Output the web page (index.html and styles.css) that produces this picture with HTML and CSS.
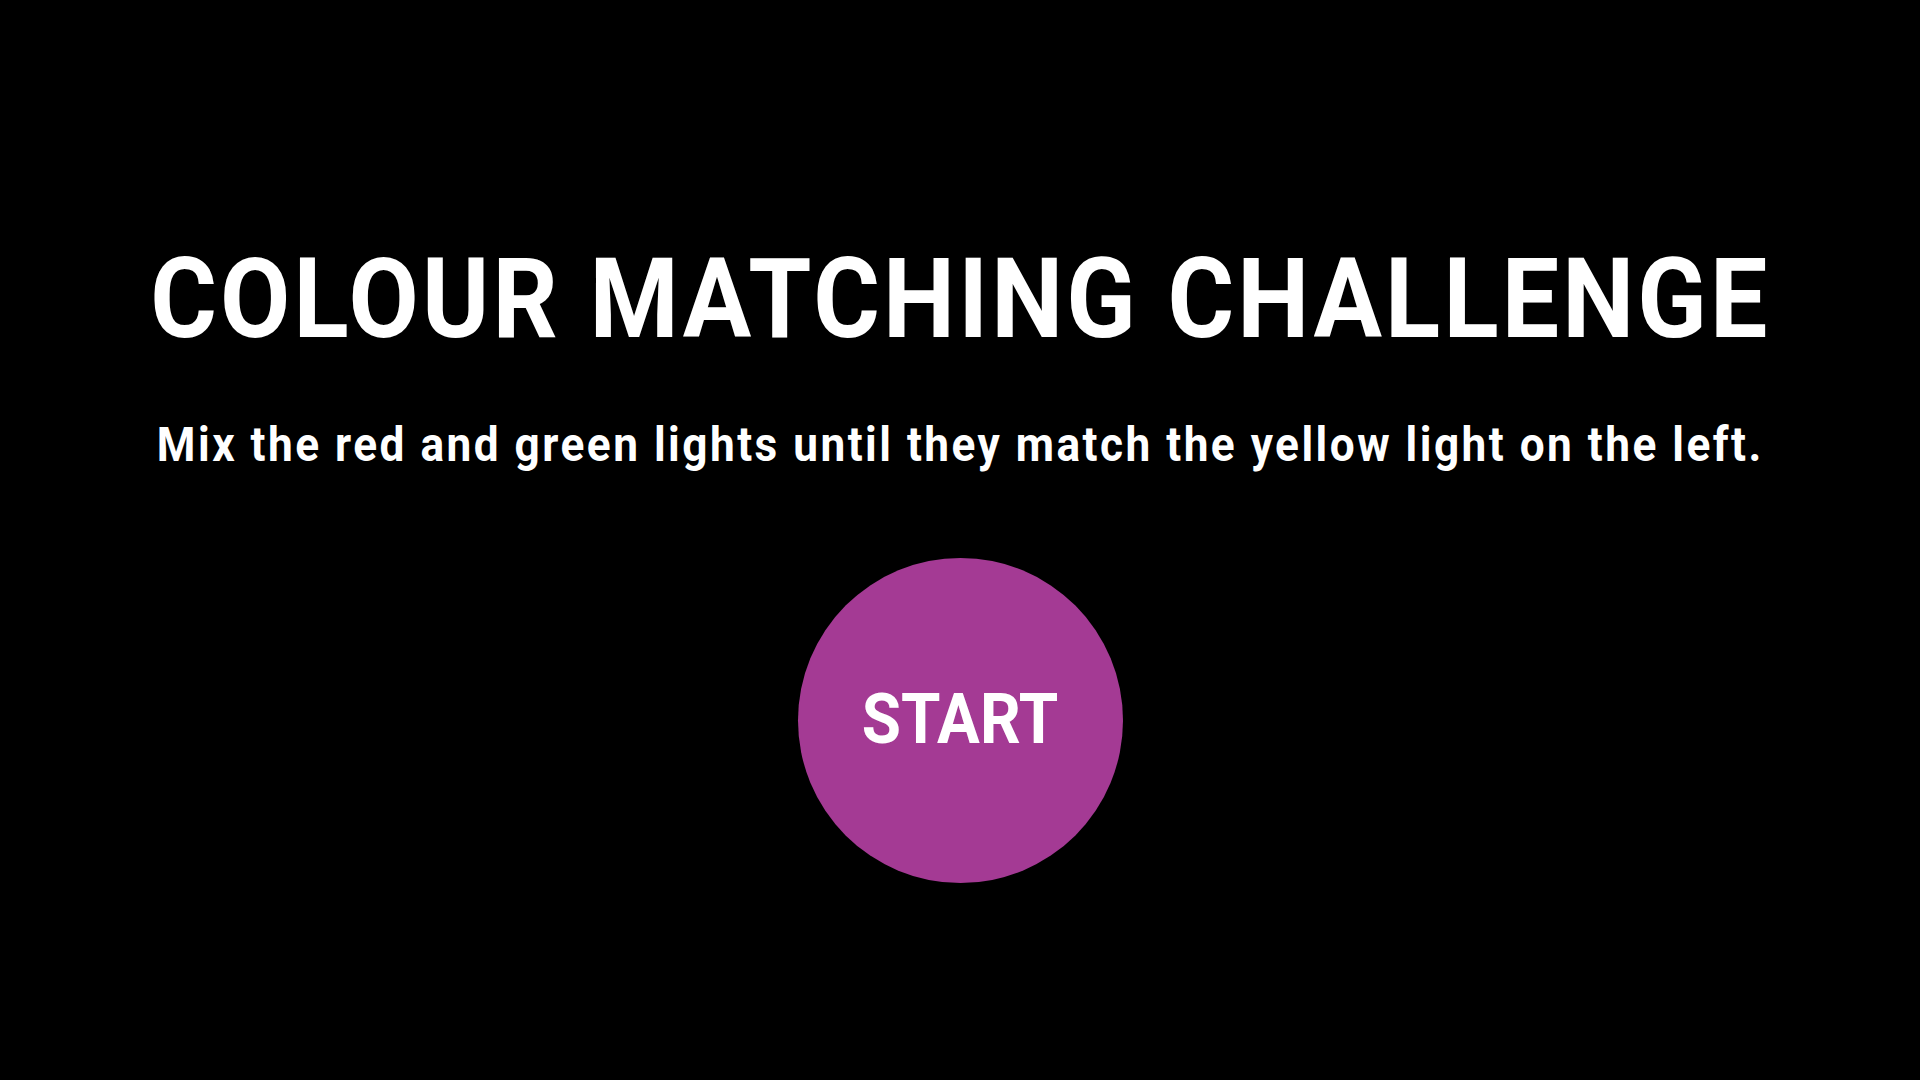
FILE: index.html
```html
<!DOCTYPE html>
<html lang="en">
<head>
<meta charset="utf-8">
<title>Colour Matching Challenge</title>
<link rel="stylesheet" href="styles.css">
</head>
<body>
<main class="screen">
  <h1 class="title">COLOUR MATCHING CHALLENGE</h1>
  <p class="subtitle">Mix the red and green lights until they match the yellow light on the left.</p>
  <button class="start"><span class="start-label">START</span></button>
</main>
</body>
</html>
```
FILE: styles.css
```css
html, body {
  margin: 0;
  padding: 0;
  background: #000;
  width: 100%;
  height: 100%;
}
.screen {
  display: flex;
  flex-direction: column;
  align-items: center;
  height: 1080px;
  color: #fff;
  font-family: Roboto, "Liberation Sans", sans-serif;
}
.title {
  margin: 233px 0 0 0;
  font-size: 112px;
  line-height: 132px;
  font-weight: 700;
  letter-spacing: 3.5px;
  white-space: nowrap;
  transform: scaleX(0.91);
}
.subtitle {
  margin: 52px 0 0 0;
  font-size: 48px;
  line-height: 56px;
  font-weight: 700;
  letter-spacing: 2.7px;
  white-space: nowrap;
  transform: scaleX(0.92);
}
.start {
  margin-top: 85px;
  width: 325px;
  height: 325px;
  border-radius: 50%;
  border: none;
  background: #a43a94;
  color: #fff;
  font-family: Roboto, "Liberation Sans", sans-serif;
  font-size: 70px;
  font-weight: 700;
  padding: 0 0 4px 0;
  cursor: pointer;
  display: flex;
  align-items: center;
  justify-content: center;
}
.start-label {
  display: inline-block;
  transform: scaleX(0.91);
}
```
